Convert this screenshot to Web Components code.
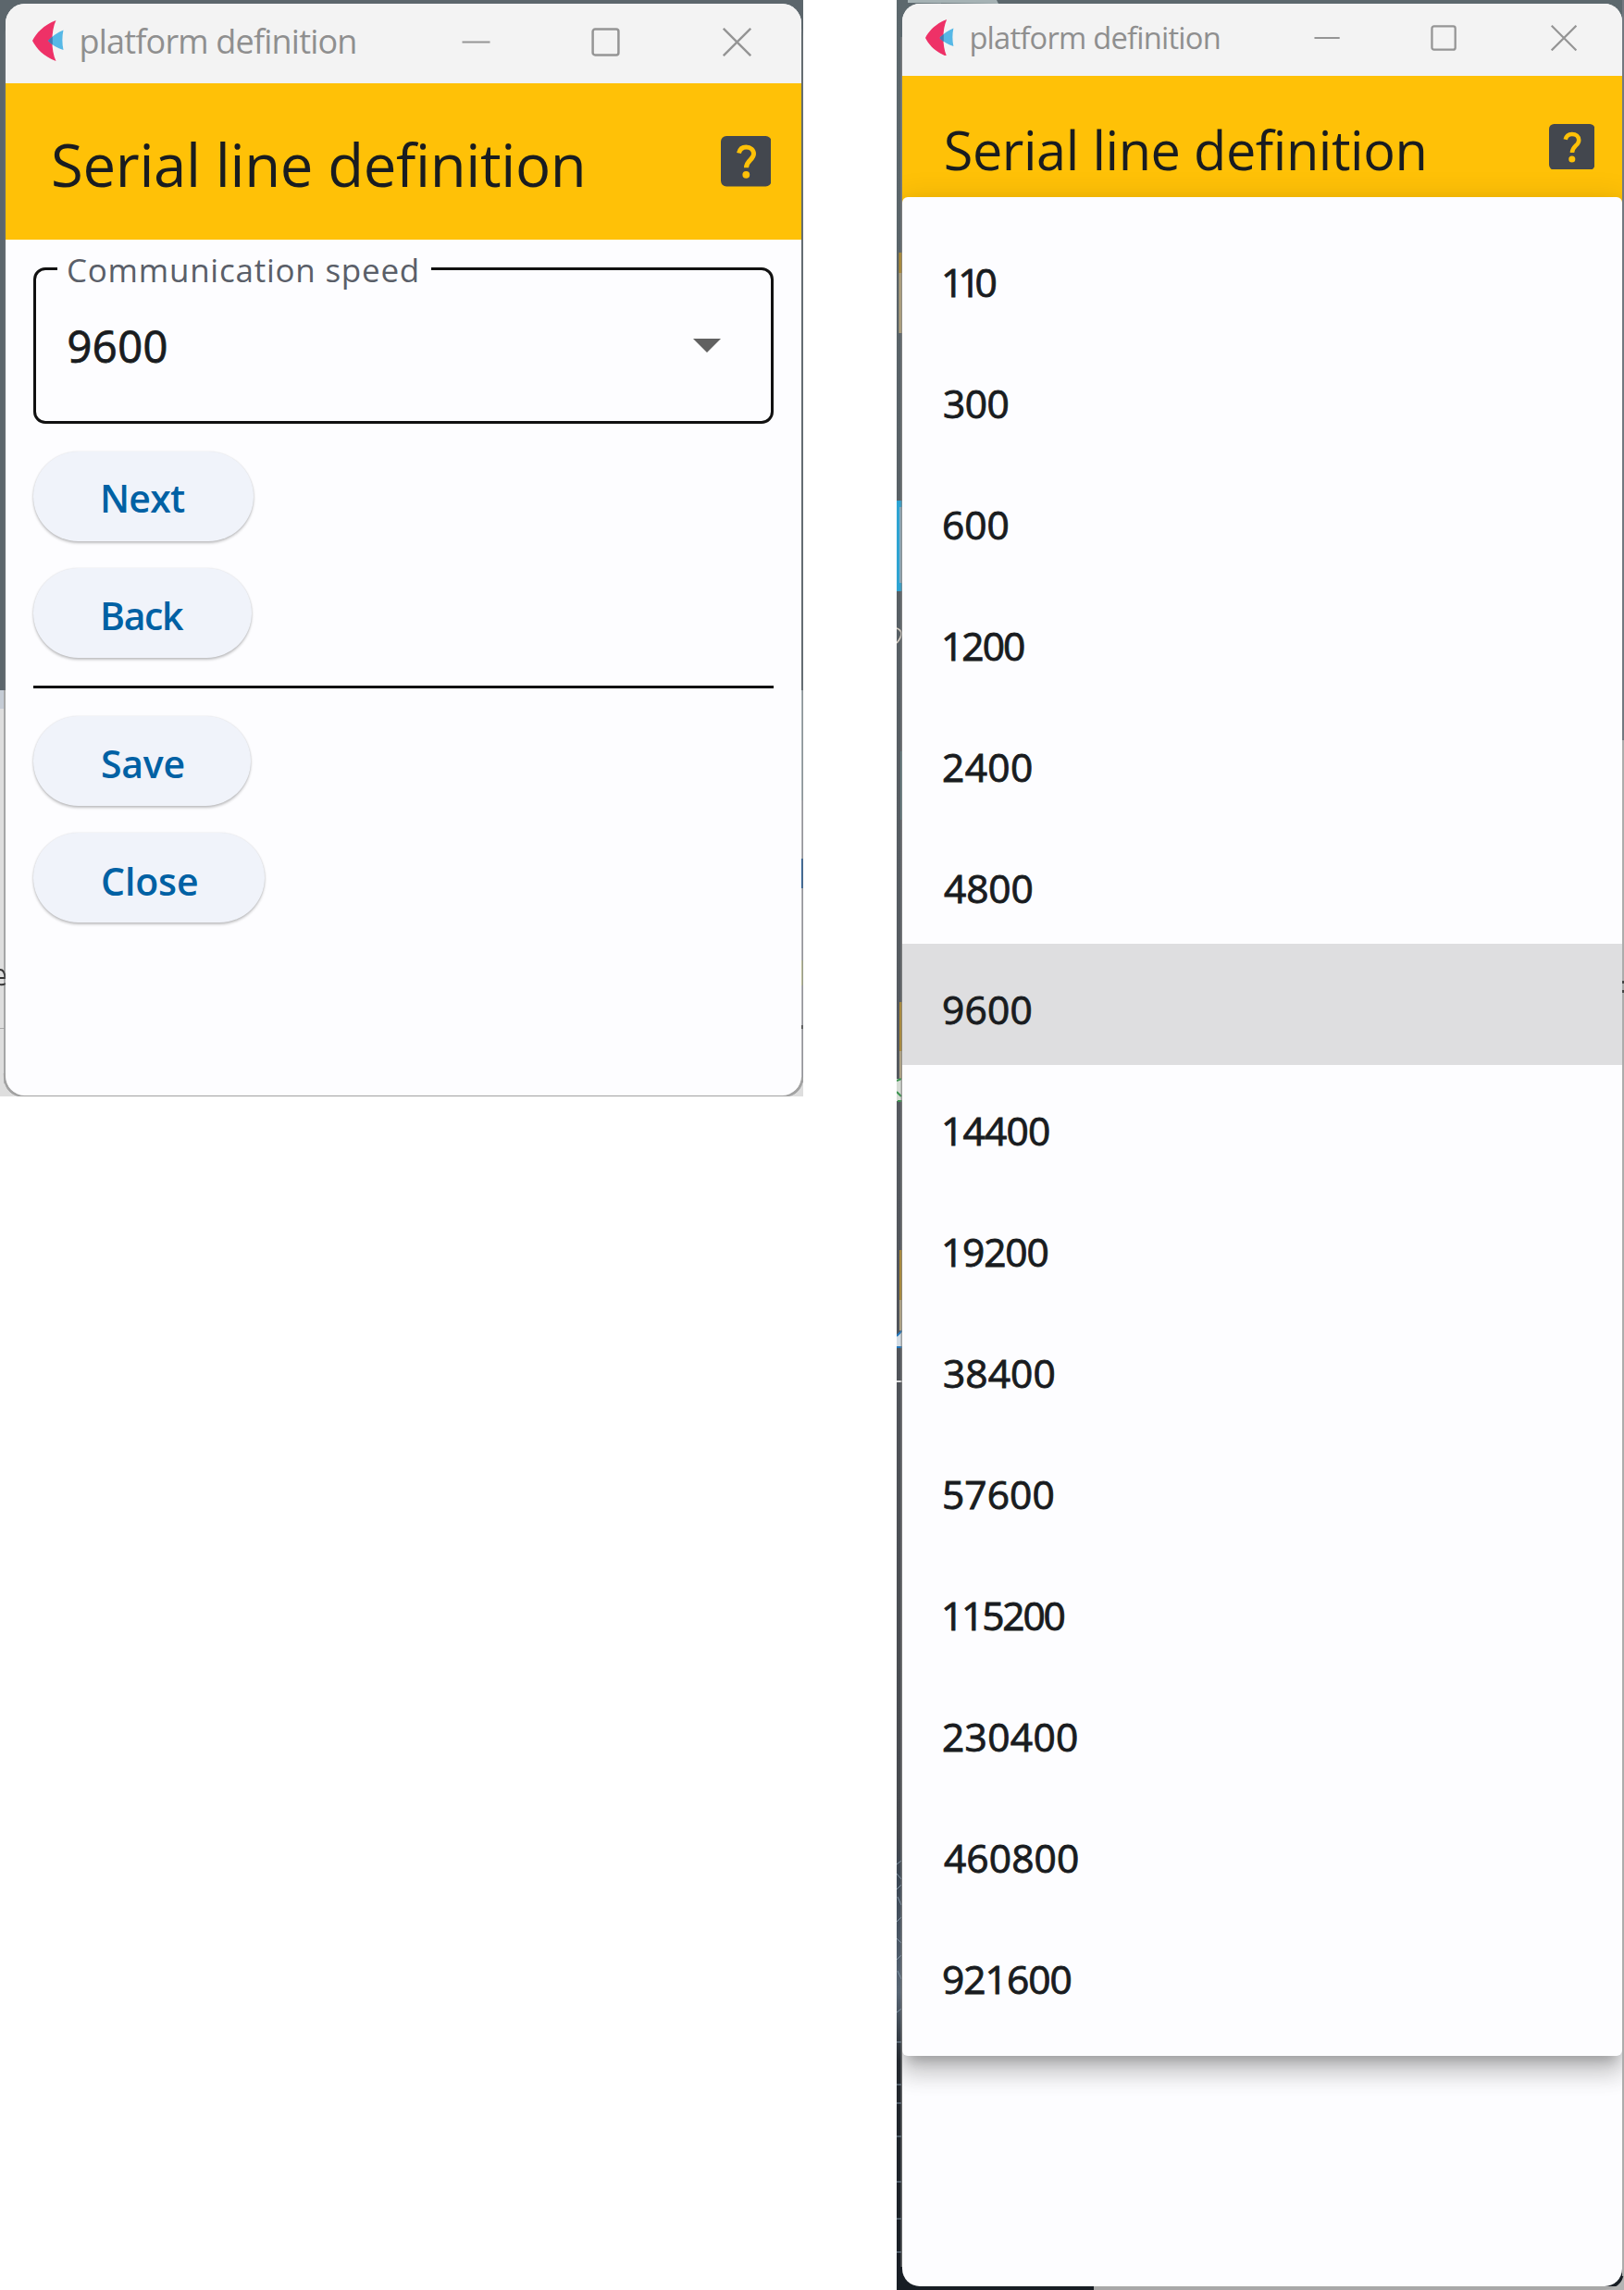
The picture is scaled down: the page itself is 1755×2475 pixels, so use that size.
<!DOCTYPE html>
<html lang="en">
<head>
<meta charset="utf-8">
<title>platform definition</title>
<style>
body{margin:0;background:#fff;font-family:"Open Sans","Noto Sans",sans-serif;color:#191c20}
main{display:flex;align-items:flex-start;gap:101px;width:1755px;height:2475px;overflow:hidden}
</style>
</head>
<body>
<main>
<desk-top kind="short"><app-window style="--k:1">
  <title-bar slot="bar" ink="296">platform definition</title-bar>
  <page-header slot="bar" ink="571">Serial line definition</page-header>
  <form-body>
    <select-field label="Communication speed"><ink-text size="47" bold=".9" ink="106">9600</ink-text></select-field>
    <pill-button wide="238" ink="89">Next</pill-button>
    <pill-button wide="236" ink="88">Back</pill-button>
    <rule-line></rule-line>
    <pill-button wide="235" ink="87.5" style="--drop:7px">Save</pill-button>
    <pill-button wide="250" ink="102" style="--drop:7px">Close</pill-button>
  </form-body>
</app-window></desk-top>
<desk-top kind="tall"><app-window style="--k:.908">
  <title-bar slot="bar" ink="268.5" k=".908">platform definition</title-bar>
  <page-header slot="bar" ink="517" k=".908">Serial line definition</page-header>
  <option-menu selected="9600"></option-menu>
</app-window></desk-top>
</main>
<script>
const pen = document.createElement('canvas').getContext('2d');
const define = (name, html, setup) => {
  const t = document.createElement('template');
  customElements.define(name, class extends HTMLElement {
    connectedCallback() {
      if (this.shadowRoot) return;
      t.innerHTML = typeof html === 'function' ? html(this) : html;
      this.attachShadow({mode:'open'}).append(t.content.cloneNode(true));
      if (setup) setup(this);
    }
  });
};

/* Text whose letter spacing is set so that its ink spans a given width. */
define('ink-text', '<style>:host{display:block;white-space:nowrap;font-variant-ligatures:none;line-height:1.362}</style><slot></slot>', el => {
  const size = +el.getAttribute('size'), weight = el.getAttribute('weight') || 400, s = el.textContent.trim();
  const bold = +(el.getAttribute('bold') || 0);
  pen.font = `${weight} ${size}px "Open Sans"`;
  pen.letterSpacing = '0.01px';
  const m = pen.measureText(s);
  const sp = (+el.getAttribute('ink') - bold - m.actualBoundingBoxRight - m.actualBoundingBoxLeft) / (s.length - 1);
  Object.assign(el.style, {fontSize:size+'px', fontWeight:weight, letterSpacing:sp.toFixed(3)+'px',
    marginLeft:(m.actualBoundingBoxLeft+bold/2).toFixed(2)+'px', marginRight:(-sp).toFixed(3)+'px'});
  if (bold) el.style.webkitTextStroke = bold + 'px';
});

const edges = {
  short: `<svg width="868" height="1185"><rect width="868" height="746" fill="#5c666c"/><rect y="746" width="868" height="20" fill="#c5ccd5"/>
    <rect y="766" width="868" height="419" fill="#dedede"/><rect x="4" y="746" width="2" height="425" fill="#b4b4b4"/>
    <rect x="866" y="746" width="2" height="119" fill="#a2adb1"/><rect x="866" y="865" width="2" height="305" fill="#b0b0b4"/>
    <rect x="866" y="928" width="2" height="32" fill="#316297"/><rect x="866" y="1038" width="2" height="27" fill="#b9bb98"/><rect x="866" y="1108" width="2" height="4" fill="#555"/>
    <path d="M0 1048q5 0 5.500 9H0M0 1064q3 1 6-1" fill="none" stroke="#333" stroke-width="2"/><path d="M0 1111.500h5" stroke="#aaa"/>
    <rect x="5" y="20" width="862.500" height="1165" rx="19" fill="none" stroke="#777c80" stroke-width="1" opacity=".5"/>
    <path d="M5 1160q0 24 22 24.500H845q20-1 22-20" fill="none" stroke="#a2a2a2" stroke-width="2.500"/></svg>`,
  tall: `<svg width="786" height="2475"><defs><linearGradient id="g" x2="0" y2="1"><stop stop-color="#5c686d"/><stop offset=".5" stop-color="#55595f"/><stop offset=".8" stop-color="#46494e"/><stop offset=".82" stop-color="#3b4653"/><stop offset=".87" stop-color="#586675"/><stop offset=".9" stop-color="#23282e"/><stop offset="1" stop-color="#171d24"/></linearGradient></defs>
    <rect width="786" height="2475" fill="url(#g)"/><path d="M12 3V0H108l2 4z" fill="#a5b2b4"/><rect x="2.500" y="273" width="3.500" height="22" fill="#b18b2e"/><rect x="2.500" y="295" width="3.500" height="65" fill="#b5a57c"/>
    <rect y="541" width="6" height="98" fill="#2ea4d3"/><rect x="3" y="548" width="3" height="82" fill="#8faec0"/><path d="M0 679q5 2 5 6t-5 10" fill="none" stroke="#d8d0c5" stroke-width="1.600"/>
    <rect x="4" y="812" width="2" height="74" fill="#557a7f"/><rect x="3" y="1083" width="3" height="53" fill="#b18b2e"/><rect x="3" y="1136" width="3" height="30" fill="#b9aa86"/>
    <rect y="1166" width="6" height="24" fill="#d5dbd4"/><path d="M0 1168l5-2M0 1180l5 5M1 1190h5" stroke="#3c9350" stroke-width="2"/>
    <rect x="3" y="1351" width="3" height="54" fill="#b18b2e"/><rect x="3" y="1405" width="3" height="33" fill="#b9aa86"/><path d="M0 1444l6-5v17H0z" fill="#d3dce4"/><path d="M0 1444l6-6M0 1456h6" stroke="#2478bd" stroke-width="2"/><rect y="1492" width="6" height="2" fill="#ddd"/>
    <path d="M0 2015l5-4M0 2025l5 6M0 2042l5-5M1 2050l4 9M0 2077l5-5M0 2095l5 5M0 2118l5-5M1 2130l4 9M0 2175l5-4M0 2207h5M0 2253h5M0 2273h5M0 2309h5M0 2358h5M0 2398h5M0 2434h5" stroke="#8094a5" stroke-width="1"/>
    <rect x="784" width="2" height="800" fill="#737880"/><rect x="784" y="800" width="2" height="1660" fill="#acacac"/><rect x="784" y="1060" width="2" height="3" fill="#444"/><rect x="784" y="1070" width="2" height="3" fill="#444"/>
    <rect x="213" y="2471" width="573" height="4" fill="#a8a8a8"/><path d="M760 2475q25 0 26-20v20z" fill="#b4b4b4"/><rect x="4.500" y="40" width="1.500" height="2410" fill="#858585" opacity=".7"/></svg>`
};
/* The strip of desktop that shows round a window. */
define('desk-top', el => `<style>:host{display:grid;flex:none;overflow:hidden}
  :host([kind=short]){width:868px;height:1185px}:host([kind=tall]){width:786px;height:2475px}
  svg,.in{grid-area:1/1;min-height:0}.in{display:flex;position:relative;box-sizing:border-box;height:1185px;padding:3.500px 2px 1.500px 6px}
  :host([kind=tall]) .in{height:2475px;padding:3.500px 2px 4px 5.500px}</style>${edges[el.getAttribute('kind')]}<div class="in"><slot></slot></div>`);

define('app-window', `<style>:host{display:flex;flex-direction:column;flex:1;position:relative;overflow:hidden;background:#fdfdff;border-radius:calc(21px*var(--k))}</style><slot name="bar"></slot><slot></slot>`);

define('title-bar', el => { const k = +(el.getAttribute('k')||1); return `<style>
  :host{display:flex;align-items:center;box-sizing:border-box;height:calc(86.500px*var(--k));padding:0 calc(54px*var(--k)) calc(3px*var(--k)) calc(28.500px*var(--k));background:#f3f3f3;color:#8f8f8f;flex:none}
  svg{display:block;flex:none}.logo{width:calc(34px*var(--k));height:calc(44px*var(--k));margin:0 calc(20px*var(--k)) calc(2px*var(--k)) 0}
  ink-text{margin-top:calc(-1px*var(--k))}.c{display:flex;margin-left:auto;gap:calc(108.500px*var(--k))}.c svg{width:calc(31px*var(--k));height:calc(31px*var(--k))}.c svg:last-child{margin-left:calc(3px*var(--k))}</style>
  <svg class="logo" viewBox="0 0 34 44"><path d="M25.500 0C12 5 4 14 0 22c4 8 12 17 25.500 22C20 32 20 12 25.500 0z" fill="#ee3167"/><path d="M33.500 10.500C27 13 21 17.500 17 22c4 4.500 10 8 16.500 10-1.500-7-1.500-14.500 0-21.500z" fill="#56b8e6"/><path d="M21.800 17.500Q18.500 20 17 22q2 2.500 4.800 4.500z" fill="#4579b1"/></svg>
  <ink-text size="${36*k}" ink="${el.getAttribute('ink')}">${el.textContent}</ink-text>
  <div class="c"><svg viewBox="0 0 31 31"><path d="M.5 15.500h30" stroke="#959595" stroke-width="2.200"/></svg>
  <svg viewBox="0 0 31 31"><rect x="1.600" y="1.600" width="27.800" height="27.800" rx="2.500" fill="none" stroke="#959595" stroke-width="2.500"/></svg>
  <svg viewBox="0 0 31 31"><path d="M.8.8l29.400 29.400M30.200.8L.8 30.200" stroke="#959595" stroke-width="2.400"/></svg></div>`; });

define('page-header', el => { const k = +(el.getAttribute('k')||1); return `<style>
  :host{display:flex;align-items:center;justify-content:space-between;box-sizing:border-box;height:calc(169px*var(--k));padding:0 calc(33px*var(--k)) 0 calc(52px*var(--k));background:#ffc107;color:#191c20;flex:none}
  ink-text{margin-top:calc(7px*var(--k))}svg{display:block;width:calc(54.500px*var(--k));height:calc(54.500px*var(--k))}</style>
  <ink-text size="${63.5*k}" ink="${el.getAttribute('ink')}">${el.textContent}</ink-text>
  <svg viewBox="0 0 54.500 54.500"><rect width="54.500" height="54.500" rx="6" fill="#43474e"/><path d="M19.500 18.500C20.500 14 23.500 12 27.300 12c4.700 0 8.200 3 8.200 7.200 0 6.500-8 7-8 15" fill="none" stroke="#ffc107" stroke-width="5"/><circle cx="27.300" cy="41.800" r="3.900" fill="#ffc107"/></svg>`; });

define('form-body', `<style>:host{display:flex;flex-direction:column;align-items:flex-start;gap:29.700px;padding:6.500px 30px 0}</style><slot></slot>`);

define('select-field', el => `<style>:host{display:block;align-self:stretch}
  fieldset{box-sizing:border-box;height:192.500px;margin:0;padding:0 54px 0 23px;border:3px solid #111;border-radius:13px;min-width:0}
  legend{box-sizing:border-box;width:404px;height:50px;padding:2px 12px 0;color:#5a5f69}
  .row{display:flex;align-items:center;justify-content:space-between;height:116px;padding-left:12px}svg{display:block}</style>
  <fieldset><legend><ink-text size="35" ink="377">${el.getAttribute('label')}</ink-text></legend>
  <div class="row"><slot></slot><svg width="30" height="15"><path d="M0 0h30L15 15z" fill="#616161"/></svg></div></fieldset>`);

define('pill-button', el => `<style>:host{display:flex;align-items:center;box-sizing:border-box;width:${el.getAttribute('wide')}px;height:97px;padding:var(--drop,6px) 0 0 75px;border-radius:49px;background:#f0f3fa;color:#0061a4;box-shadow:0 2px 3px rgba(0,0,0,.24),0 0 2px rgba(0,0,0,.1)}</style>
  <ink-text size="41" weight="600" ink="${el.getAttribute('ink')}">${el.textContent}</ink-text>`);

define('rule-line', `<style>:host{display:block;align-self:stretch;height:3px;background:#111}</style>`);

/* Each baud rate with the width of its label. */
const rates = [['110',57.5],['300',70.5],['600',70.5],['1200',88],['2400',96],['4800',96.5],['9600',95.6],['14400',115],['19200',113.5],['38400',120.5],['57600',119.5],['115200',131.5],['230400',145],['460800',146],['921600',138.5]];
define('option-menu', el => `<style>
  :host{display:block;position:absolute;left:0;right:0;top:209px;height:2009.500px;box-sizing:border-box;padding-top:21.500px;border-radius:6px;background:#fdfdff;
    box-shadow:0 12px 12px -7px rgba(0,0,0,.2),0 19px 24px 2px rgba(0,0,0,.14),0 7px 33px 5px rgba(0,0,0,.12)}
  div{display:flex;align-items:center;box-sizing:border-box;height:131.050px;padding:10px 0 0 45px}.on{background:#dedee0}</style>
  ${rates.map(([r,w]) => `<div class="${r===el.getAttribute('selected')?'on':''}"><ink-text size="42.5" bold=".9" ink="${w}">${r}</ink-text></div>`).join('')}`);
</script>
</body>
</html>
